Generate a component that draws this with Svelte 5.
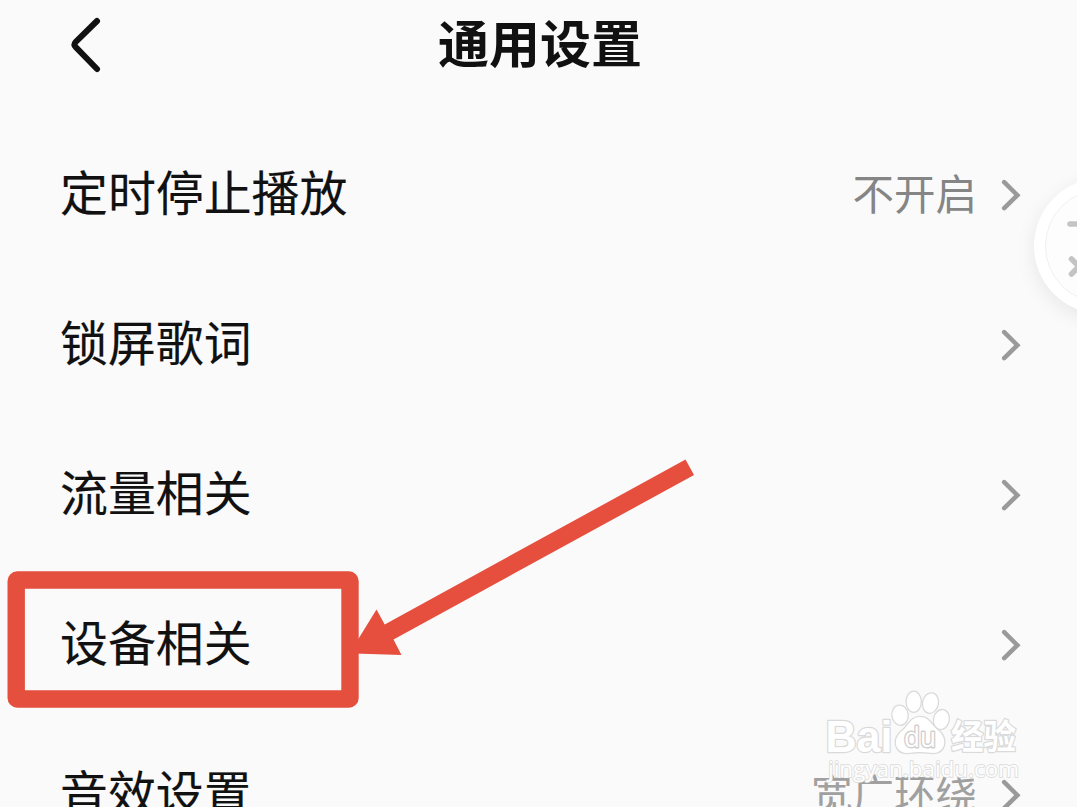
<script>
  const rows = [
    { label: '定时停止播放', value: '不开启' },
    { label: '锁屏歌词', value: '' },
    { label: '流量相关', value: '' },
    { label: '设备相关', value: '' },
    { label: '音效设置', value: '宽广环绕', faded: true }
  ];
</script>

<main class="screen">
  <header>
    <svg class="back" width="40" height="60" viewBox="0 0 40 60" aria-hidden="true">
      <path d="M32 6 L10.5 27.2 Q8.5 29.5 10.5 31.8 L32 54" />
    </svg>
    <h1>通用设置</h1>
  </header>

  <div class="list">
    {#each rows as row}
      <div class="row">
        <span class="label">{row.label}</span>
        <span class="value" class:faded={row.faded}>{row.value}</span>
        <svg class="chevron" width="20" height="32" viewBox="0 0 20 32" aria-hidden="true">
          <path d="M3.2 3.2 L16.4 16.2 L3.2 29.2" />
        </svg>
      </div>
    {/each}
  </div>

  <div class="floating">
    <div class="ring"></div>
    <svg width="80" height="100" viewBox="0 0 80 100" aria-hidden="true">
      <path d="M25 26 H59 M26.5 61 L34 68.5 L26.5 76 M41.5 61 L34 68.5 L41.5 76" />
    </svg>
  </div>

  <svg class="overlay" width="1077" height="807" viewBox="0 0 1077 807">
    <rect x="16.2" y="580" width="333.8" height="119" rx="1" class="frame" />
    <path class="arrow" d="M685.5 459.5 L694 475 L393.5 639.5 L401.5 655 L354 653.5 V646 L376.5 609.5 L384.7 624.5 Z" />

    <g class="mark">
      <text x="825.5" y="751.5" class="bai" textLength="67" lengthAdjust="spacingAndGlyphs">Bai</text>
      <ellipse cx="900" cy="715.2" rx="7.5" ry="9.5" transform="rotate(-8 900 715)" />
      <ellipse cx="913.7" cy="701.7" rx="7" ry="10" />
      <ellipse cx="930.5" cy="703" rx="7.3" ry="9.7" transform="rotate(12 930 703)" />
      <ellipse cx="941.3" cy="719.5" rx="7.3" ry="9.5" transform="rotate(12 941 720)" />
      <path d="M920 717 C911 717 909 725 902 731 C892 739 895 752 906 753 C911 753 914 752 920 752 C926 752 930 753 934 753 C945 752 948 740 939 731 C931 725 929 717 920 717 Z" />
      <text x="904" y="746.5" class="du" textLength="32" lengthAdjust="spacingAndGlyphs">du</text>
      <text x="951" y="749" class="jy" textLength="65" lengthAdjust="spacingAndGlyphs">经验</text>
      <text x="828" y="777" class="site" textLength="191" lengthAdjust="spacingAndGlyphs">jingyan.baidu.com</text>
    </g>
  </svg>
</main>

<style>
  :global(body) { margin: 0; background: #fafafa; }
  .screen {
    position: relative;
    width: 1077px;
    height: 807px;
    overflow: hidden;
    background: #fafafa;
    color: #111;
    font-family: "Noto Sans CJK SC", sans-serif;
  }
  header {
    display: grid;
    grid-template-columns: 122px 1fr 119px;
    align-items: center;
    height: 90px;
    margin-bottom: 30px;
  }
  .back { justify-self: end; margin-right: 17px; }
  .back path { fill: none; stroke: #111; stroke-width: 6; stroke-linecap: round; stroke-linejoin: round; }
  h1 { margin: 0; padding-bottom: 8px; text-align: center; font-size: 51px; line-height: 82px; font-weight: 700; }
  .list { display: flex; flex-direction: column; }
  .row {
    display: flex;
    align-items: center;
    flex: none;
    height: 150px;
    padding: 0 56px 0 60px;
  }
  .label { flex: 1; padding-bottom: 11px; font-size: 47.9px; line-height: 70px; -webkit-text-stroke: 0.15px #111; }
  .value { padding-bottom: 7px; font-size: 41.5px; line-height: 60px; color: #858585; }
  .value.faded { color: #a0a0a0; }
  .chevron { margin-left: 24px; }
  .chevron path { fill: none; stroke: #9a9a9a; stroke-width: 4.5; stroke-linecap: round; stroke-linejoin: miter; }
  .floating {
    position: absolute;
    left: 1034px;
    top: 178px;
    width: 136px;
    height: 136px;
    border-radius: 50%;
    background: #fff;
    box-shadow: 0 5px 20px #00000014;
  }
  .ring {
    position: absolute;
    inset: 11px;
    border: 1px solid #f0f0f0;
    border-radius: 50%;
    background: #fdfdfd;
  }
  .floating svg { position: absolute; left: 11px; top: 20px; }
  .floating path { fill: none; stroke: #c4c4c4; stroke-width: 5.5; stroke-linecap: round; }
  .overlay { position: absolute; inset: 0; }
  .frame { fill: none; stroke: #e54f3e; stroke-width: 17.4; stroke-linejoin: round; }
  .arrow { fill: #e64e3d; }
  .mark { fill: #fff; stroke: #dadada; stroke-width: 2.6; paint-order: stroke; stroke-linejoin: round; }
  .bai { font: 700 44px "Liberation Sans", sans-serif; }
  .du { font: 400 28px "Open Sans", sans-serif; fill: #fff; stroke: #d0d0d0; stroke-width: 3; }
  .jy { font: 700 34px "Noto Sans CJK SC", sans-serif; }
  .site { font: 400 22px "Open Sans", sans-serif; stroke: #dedede; stroke-width: 1.8; }
</style>
